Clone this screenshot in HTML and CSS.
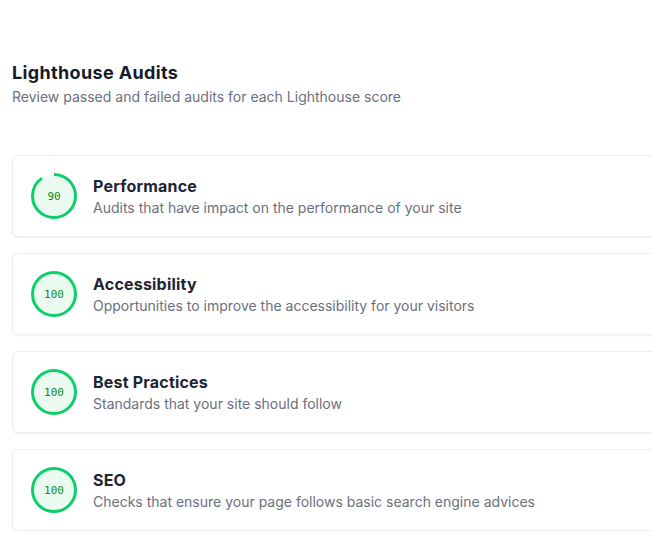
FILE: index.html
```html
<!DOCTYPE html>
<html>
<head>
<meta charset="utf-8">
<link rel="stylesheet" href="styles.css">
</head>
<body>
<main class="page">
  <header class="head">
    <h1 class="title">Lighthouse Audits</h1>
    <p class="subtitle">Review passed and failed audits for each Lighthouse score</p>
  </header>
  <section class="list">
    <div class="card">
      <div class="gauge">
        <svg viewBox="0 0 46 46" width="46" height="46">
          <circle cx="23" cy="23" r="21.5" fill="#ebfaf0"/>
          <circle cx="23" cy="23" r="21.5" fill="none" stroke="#0ccf69" stroke-width="3" stroke-dasharray="121.58 135.09" transform="rotate(-90 23 23)"/>
        </svg>
        <span class="score">90</span>
      </div>
      <div class="info">
        <div class="name">Performance</div>
        <div class="desc">Audits that have impact on the performance of your site</div>
      </div>
    </div>
    <div class="card">
      <div class="gauge">
        <svg viewBox="0 0 46 46" width="46" height="46">
          <circle cx="23" cy="23" r="21.5" fill="#ebfaf0" stroke="#0ccf69" stroke-width="3"/>
        </svg>
        <span class="score">100</span>
      </div>
      <div class="info">
        <div class="name">Accessibility</div>
        <div class="desc">Opportunities to improve the accessibility for your visitors</div>
      </div>
    </div>
    <div class="card">
      <div class="gauge">
        <svg viewBox="0 0 46 46" width="46" height="46">
          <circle cx="23" cy="23" r="21.5" fill="#ebfaf0" stroke="#0ccf69" stroke-width="3"/>
        </svg>
        <span class="score">100</span>
      </div>
      <div class="info">
        <div class="name">Best Practices</div>
        <div class="desc">Standards that your site should follow</div>
      </div>
    </div>
    <div class="card">
      <div class="gauge">
        <svg viewBox="0 0 46 46" width="46" height="46">
          <circle cx="23" cy="23" r="21.5" fill="#ebfaf0" stroke="#0ccf69" stroke-width="3"/>
        </svg>
        <span class="score">100</span>
      </div>
      <div class="info">
        <div class="name">SEO</div>
        <div class="desc">Checks that ensure your page follows basic search engine advices</div>
      </div>
    </div>
  </section>
</main>
</body>
</html>
```
FILE: styles.css
```css
html { overflow: hidden; }
body {
  margin: 0;
  background: #ffffff;
  font-family: Inter, "Noto Sans", sans-serif;
  color: #1f2533;
}
.page {
  width: 700px;
  padding: 60px 0 0 12px;
}
.head { margin-bottom: 48px; }
.title {
  margin: 0;
  font-size: 18px;
  line-height: 26px;
  font-weight: 700;
  color: #151b28;
  letter-spacing: 0.35px;
}
.subtitle {
  margin: 1px 0 0;
  font-size: 14px;
  line-height: 20px;
  color: #6b7080;
}
.list {
  display: flex;
  flex-direction: column;
  gap: 16px;
}
.card {
  display: flex;
  align-items: center;
  gap: 16px;
  padding: 17px 18px;
  border: 1px solid #eceef0;
  border-radius: 6px;
  box-shadow: 0 1px 2px rgba(0, 0, 0, 0.06);
  background: #fff;
}
.gauge {
  position: relative;
  width: 46px;
  height: 46px;
  flex: none;
}
.gauge svg { display: block; }
.score {
  position: absolute;
  inset: 0;
  display: flex;
  align-items: center;
  justify-content: center;
  font-family: "DejaVu Sans Mono", "Liberation Mono", monospace;
  font-size: 11px;
  color: #0a8a24;
}
.info { display: flex; flex-direction: column; padding-top: 1px; }
.name {
  font-size: 16px;
  line-height: 22px;
  font-weight: 700;
  color: #1d2433;
  letter-spacing: 0.2px;
}
.desc {
  margin-top: 1px;
  font-size: 14px;
  line-height: 20px;
  color: #6b7080;
}
```
